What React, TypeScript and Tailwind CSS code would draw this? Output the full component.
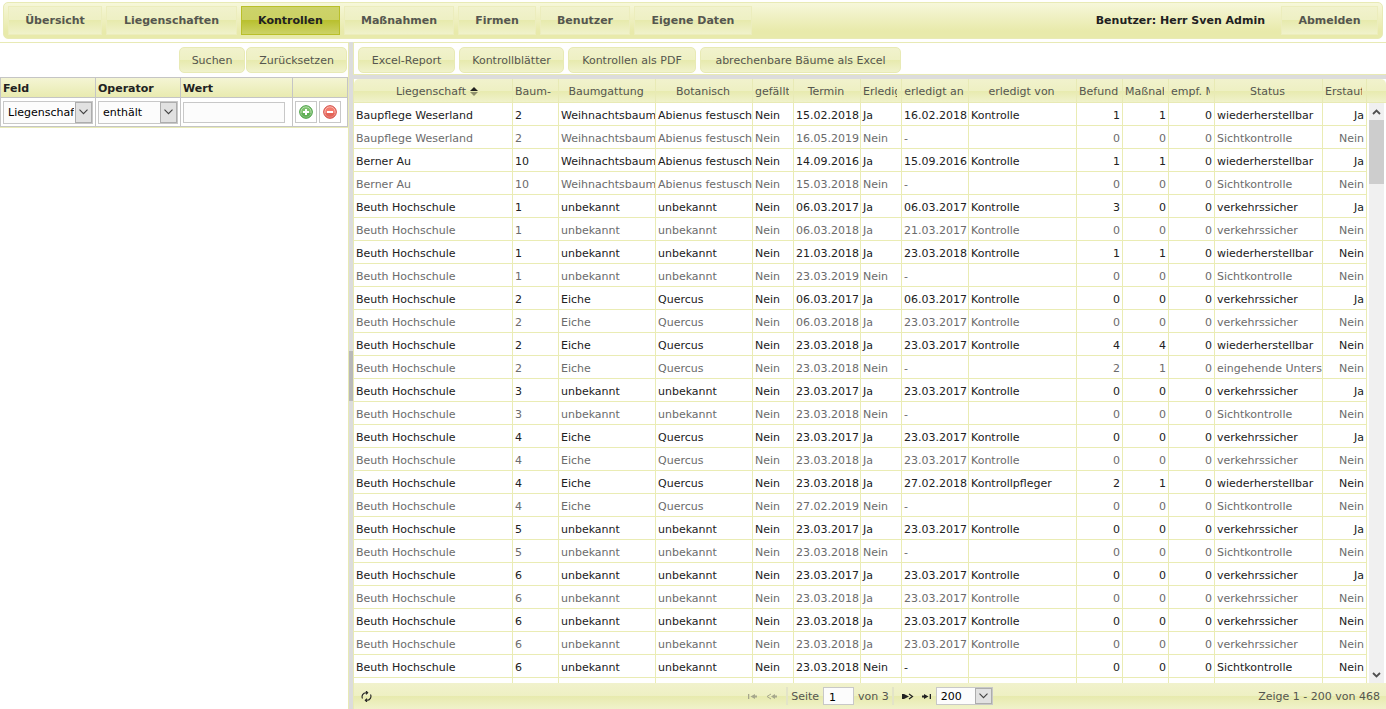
import type { ReactNode } from "react";

type Row = string[];

const navItems = [
  { label: "Übersicht", width: "min-w-[94px]" },
  { label: "Liegenschaften", width: "min-w-[131px]" },
  { label: "Kontrollen", width: "min-w-[99px]", active: true },
  { label: "Maßnahmen", width: "min-w-[110px]" },
  { label: "Firmen", width: "min-w-[78px]" },
  { label: "Benutzer", width: "min-w-[90px]" },
  { label: "Eigene Daten", width: "min-w-[118px]" },
];

const columns = [
  { label: "Liegenschaft", width: "", sorted: true },
  { label: "Baum-", width: "w-[46px]", narrow: true },
  { label: "Baumgattung", width: "w-[97px]" },
  { label: "Botanisch", width: "w-[97px]" },
  { label: "gefällt", width: "w-[41px]", narrow: true },
  { label: "Termin", width: "w-[67px]" },
  { label: "Erledigt", width: "w-[41px]", narrow: true },
  { label: "erledigt an", width: "w-[67px]" },
  { label: "erledigt von", width: "w-[108px]" },
  { label: "Befunde", width: "w-[46px]", narrow: true, right: true },
  { label: "Maßnahmen", width: "w-[46px]", narrow: true, right: true },
  { label: "empf. Maßnahmen", width: "w-[46px]", narrow: true, right: true },
  { label: "Status", width: "w-[108px]" },
  { label: "Erstaufnahme", width: "w-[44px]", narrow: true, right: true },
];

const W = "Weihnachtsbaum";
const A = "Abienus festuschristi";
const BH = "Beuth Hochschule";
const U = "unbekannt";
const K = "Kontrolle";
const V = "verkehrssicher";
const S = "Sichtkontrolle";
const H = "wiederherstellbar";

const rows: Row[] = [
  ["Baupflege Weserland", "2", W, A, "Nein", "15.02.2018", "Ja", "16.02.2018", K, "1", "1", "0", H, "Ja"],
  ["Baupflege Weserland", "2", W, A, "Nein", "16.05.2019", "Nein", "-", "", "0", "0", "0", S, "Nein"],
  ["Berner Au", "10", W, A, "Nein", "14.09.2016", "Ja", "15.09.2016", K, "1", "1", "0", H, "Ja"],
  ["Berner Au", "10", W, A, "Nein", "15.03.2018", "Nein", "-", "", "0", "0", "0", S, "Nein"],
  [BH, "1", U, U, "Nein", "06.03.2017", "Ja", "06.03.2017", K, "3", "0", "0", V, "Ja"],
  [BH, "1", U, U, "Nein", "06.03.2018", "Ja", "21.03.2017", K, "0", "0", "0", V, "Nein"],
  [BH, "1", U, U, "Nein", "21.03.2018", "Ja", "23.03.2018", K, "1", "1", "0", H, "Nein"],
  [BH, "1", U, U, "Nein", "23.03.2019", "Nein", "-", "", "0", "0", "0", S, "Nein"],
  [BH, "2", "Eiche", "Quercus", "Nein", "06.03.2017", "Ja", "06.03.2017", K, "0", "0", "0", V, "Ja"],
  [BH, "2", "Eiche", "Quercus", "Nein", "06.03.2018", "Ja", "23.03.2017", K, "0", "0", "0", V, "Nein"],
  [BH, "2", "Eiche", "Quercus", "Nein", "23.03.2018", "Ja", "23.03.2017", K, "4", "4", "0", H, "Nein"],
  [BH, "2", "Eiche", "Quercus", "Nein", "23.03.2018", "Nein", "-", "", "2", "1", "0", "eingehende Untersuchung", "Nein"],
  [BH, "3", U, U, "Nein", "23.03.2017", "Ja", "23.03.2017", K, "0", "0", "0", V, "Ja"],
  [BH, "3", U, U, "Nein", "23.03.2018", "Nein", "-", "", "0", "0", "0", S, "Nein"],
  [BH, "4", "Eiche", "Quercus", "Nein", "23.03.2017", "Ja", "23.03.2017", K, "0", "0", "0", V, "Ja"],
  [BH, "4", "Eiche", "Quercus", "Nein", "23.03.2018", "Ja", "23.03.2017", K, "0", "0", "0", V, "Nein"],
  [BH, "4", "Eiche", "Quercus", "Nein", "23.03.2018", "Ja", "27.02.2018", "Kontrollpfleger", "2", "1", "0", H, "Nein"],
  [BH, "4", "Eiche", "Quercus", "Nein", "27.02.2019", "Nein", "-", "", "0", "0", "0", S, "Nein"],
  [BH, "5", U, U, "Nein", "23.03.2017", "Ja", "23.03.2017", K, "0", "0", "0", V, "Ja"],
  [BH, "5", U, U, "Nein", "23.03.2018", "Nein", "-", "", "0", "0", "0", S, "Nein"],
  [BH, "6", U, U, "Nein", "23.03.2017", "Ja", "23.03.2017", K, "0", "0", "0", V, "Ja"],
  [BH, "6", U, U, "Nein", "23.03.2018", "Ja", "23.03.2017", K, "0", "0", "0", V, "Nein"],
  [BH, "6", U, U, "Nein", "23.03.2018", "Ja", "23.03.2017", K, "0", "0", "0", V, "Nein"],
  [BH, "6", U, U, "Nein", "23.03.2018", "Ja", "23.03.2017", K, "0", "0", "0", V, "Nein"],
  [BH, "6", U, U, "Nein", "23.03.2018", "Nein", "-", "", "0", "0", "0", S, "Nein"],
  ["", "", "", "", "", "", "", "", "", "", "", "", "", ""],
];

const glossy = "bg-[linear-gradient(#f1f2cd,#eef0c3_50%,#e7eaad_50%,#f0f2cb)]";

function ToolButton({ children, width }: { children: ReactNode; width: string }) {
  return (
    <button
      type="button"
      className={`h-[26px] rounded-[5px] border border-[#e8eab5] pt-[2px] text-center text-[#55564f] ${glossy} ${width}`}
    >
      {children}
    </button>
  );
}

// Select with its own arrow box on the right
function Select({ label, value, width, height }: { label: string; value: string; width: string; height: string }) {
  return (
    <span className={`relative inline-block border border-[#c8c8c8] bg-[#fcfcfc] align-middle ${width} ${height}`}>
      <select
        aria-label={label}
        className="block h-full w-full appearance-none overflow-hidden bg-transparent pt-[2px] pr-[18px] pl-1 text-black outline-none"
      >
        <option>{value}</option>
      </select>
      <span className="pointer-events-none absolute inset-y-0 right-0 flex w-[17px] items-center justify-center border border-[#adadad] bg-[#e1e1e1]">
        <svg width="9" height="6" viewBox="0 0 9 6" fill="none" stroke="#404040" strokeWidth="1.1">
          <path d="M0.5 0.7 4.5 4.7 8.5 0.7" />
        </svg>
      </span>
    </span>
  );
}

function RoundIcon({ kind }: { kind: "add" | "remove" }) {
  const dark = kind === "add" ? "#3f9a3a" : "#d0443c";
  const light = kind === "add" ? "#7cc26c" : "#f47c6e";
  return (
    <svg width="14" height="14" viewBox="0 0 14 14">
      <circle cx="7" cy="7" r="6.3" fill={light} stroke={dark} />
      <circle cx="7" cy="7" r="5.2" fill="none" stroke="#fff" strokeOpacity="0.45" />
      <path d="M2 8a5 5 0 0 0 10 0Z" fill={dark} fillOpacity="0.45" />
      <path d={kind === "add" ? "M4 7h6M7 4v6" : "M4 7h6"} stroke="#fff" strokeWidth="2" />
    </svg>
  );
}

function Navigation() {
  return (
    <nav className="mx-[3px] mt-[2px] mb-[3px] flex h-[37px] shrink-0 items-center gap-1 rounded-[5px] border border-[#e8eab5] bg-[linear-gradient(#f6f7da,#e8eaab_80%)] px-1 font-bold text-[#55564f]">
      {navItems.map((item) => (
        <a
          key={item.label}
          href="#"
          aria-current={item.active ? "page" : undefined}
          className={`flex h-[29px] items-center justify-center border pt-px ${item.width} ${
            item.active
              ? "border-[#b9bf2a] bg-[linear-gradient(#cdd36a,#cbd163_50%,#b9c02f_50%,#ccd266)] text-[#212121]"
              : `border-[#ecedbd] ${glossy}`
          }`}
        >
          {item.label}
        </a>
      ))}
      <span className="ml-auto pt-px text-[#212121]">Benutzer: Herr Sven Admin</span>
      <button type="button" className={`ml-3 h-[29px] w-[97px] border border-[#ecedbd] pt-px ${glossy}`}>
        Abmelden
      </button>
    </nav>
  );
}

function SearchPanel() {
  return (
    <aside className="w-[349px] shrink-0 border-t border-r border-[#e8eab5]">
      <div className="flex h-[34px] items-center justify-end gap-px pr-px">
        <ToolButton width="w-[66px]">Suchen</ToolButton>
        <ToolButton width="w-[101px]">Zurücksetzen</ToolButton>
      </div>
      <table className="w-full table-fixed border-collapse">
        <thead>
          <tr className="h-5 bg-[linear-gradient(#f4f5d4,#e8eaae)] text-left text-[#212121]">
            <th className="w-[95px] border border-[#c5c5c5] px-[2px] pt-[2px] pb-0">Feld</th>
            <th className="w-[85px] border border-[#c5c5c5] px-[2px] pt-[2px] pb-0">Operator</th>
            <th className="border border-[#c5c5c5] px-[2px] pt-[2px] pb-0">Wert</th>
            <th className="w-[55px] border border-[#c5c5c5] p-0" aria-label="Aktion" />
          </tr>
        </thead>
        <tbody>
          <tr className="h-[29px]">
            <td className="border border-[#c5c5c5] px-[2px] py-0">
              <Select label="Feld" value="Liegenschaft" width="w-[90px]" height="h-[23px]" />
            </td>
            <td className="border border-[#c5c5c5] px-[2px] py-0">
              <Select label="Operator" value="enthält" width="w-[80px]" height="h-[23px]" />
            </td>
            <td className="border border-[#c5c5c5] px-[2px] py-0">
              <input
                aria-label="Wert"
                className="block h-[21px] w-[102px] border border-[#c8c8c8] bg-[#fcfcfc] px-1 outline-none"
              />
            </td>
            <td className="border border-[#c5c5c5] px-[2px] py-0">
              <div className="flex gap-[2px]">
                <button type="button" aria-label="Hinzufügen" className="flex h-[22px] w-[22px] items-center justify-center border border-[#c8c8c8]">
                  <RoundIcon kind="add" />
                </button>
                <button type="button" aria-label="Entfernen" className="flex h-[22px] w-[22px] items-center justify-center border border-[#c8c8c8]">
                  <RoundIcon kind="remove" />
                </button>
              </div>
            </td>
          </tr>
        </tbody>
      </table>
      <div className="border-t border-[#e8eab5]" />
    </aside>
  );
}

function Columns() {
  return (
    <colgroup>
      {columns.map((c) => (
        <col key={c.label} className={c.width} />
      ))}
    </colgroup>
  );
}

function Grid() {
  return (
    <section className="flex min-h-0 flex-1 flex-col overflow-hidden border-l border-[#e8eab5]">
      <div className={`shrink-0 overflow-hidden rounded-t-[5px] border-b border-[#e8eab5] pr-[19px] ${glossy}`}>
        <table className="w-full table-fixed border-separate border-spacing-0 text-[#55564f]">
          <Columns />
          <thead>
            <tr className="h-[23px]">
              {columns.map((c) => (
                <th
                  key={c.label}
                  scope="col"
                  className={`border-r border-[#e8eab5] pt-[2px] pr-1 pb-0 font-normal whitespace-nowrap ${
                    c.sorted ? "pl-3" : "pl-[2px]"
                  }`}
                >
                  <div className={`overflow-hidden ${c.narrow ? "text-left" : ""}`}>
                    {c.label}
                    {c.sorted && (
                      <svg className="ml-1 inline-block align-[-1px]" width="8" height="9" viewBox="0 0 8 9">
                        <path d="M0 4 4 0 8 4Z" fill="#222" />
                        <path d="M0 5 4 9 8 5Z" fill="#8f906c" />
                      </svg>
                    )}
                  </div>
                </th>
              ))}
            </tr>
          </thead>
        </table>
      </div>
      <div className="flex min-h-0 flex-1">
        <div className="min-w-0 flex-1 overflow-hidden">
          <table className="w-full table-fixed border-separate border-spacing-0">
            <Columns />
            <tbody>
              {rows.map((row, r) => (
                <tr key={r} className={`h-[23px] ${r % 2 ? "text-[#6b6b6b]" : "text-[#212121]"}`}>
                  {row.map((cell, i) => (
                    <td
                      key={i}
                      className={`overflow-hidden border-r border-b border-[#eaecb4] pt-[3px] pb-0 pl-[2px] whitespace-nowrap ${
                        columns[i].right ? "pr-[2px] text-right" : ""
                      }`}
                    >
                      {cell}
                    </td>
                  ))}
                </tr>
              ))}
            </tbody>
          </table>
        </div>
        <div className="mx-[2px] flex w-[15px] shrink-0 flex-col items-center bg-[#f0f0f0]">
          <div className="flex h-[17px] shrink-0 items-center">
            <svg width="9" height="6" viewBox="0 0 9 6" fill="none" stroke="#505050" strokeWidth="1.8">
              <path d="M1 5 4.5 1.5 8 5" />
            </svg>
          </div>
          <div className="h-16 w-full bg-[#cdcdcd]" />
          <div className="mt-auto flex h-[17px] shrink-0 items-center">
            <svg width="9" height="6" viewBox="0 0 9 6" fill="none" stroke="#505050" strokeWidth="1.8">
              <path d="M1 1 4.5 4.5 8 1" />
            </svg>
          </div>
        </div>
      </div>
      <Pager />
    </section>
  );
}

function Pager() {
  return (
    <div className={`grid h-[26px] shrink-0 grid-cols-[1fr_auto_1fr] items-center pr-[6px] pl-[7px] text-[#55564f] ${glossy}`}>
      <button type="button" aria-label="Aktualisieren" className="w-[11px] pt-px">
        <svg width="11" height="11" viewBox="0 0 11 11" fill="none" stroke="#222" strokeWidth="1.1">
          <path d="M1.5 7.5A4 4 0 0 1 5 1.7h1M5 0l1.7 1.7L5 3.4M9.5 3.5A4 4 0 0 1 6 9.3H5M6 7.6 4.3 9.3 6 11" />
        </svg>
      </button>
      <div className="flex items-center">
        <button type="button" aria-label="Erste Seite" disabled className="mr-2">
          <svg width="10" height="7" viewBox="0 0 10 7" fill="#a6a78c">
            <path d="M0 1h1.3v5H0ZM2.500 3.500 7 1v1.500h2v2H7V6Z" />
          </svg>
        </button>
        <button type="button" aria-label="Vorige Seite" disabled className="mr-2">
          <svg width="12" height="7" viewBox="0 0 12 7" fill="#a6a78c">
            <path d="M5 3.5 9 1v1.500h2v2H9V6Z" />
            <path d="M5 1 1 3.5 5 6" fill="none" stroke="#a6a78c" />
          </svg>
        </button>
        <span className="mr-[3px] h-[18px] w-[2px] bg-[#e3e4c8]" />
        <label htmlFor="page" className="pt-[2px]">Seite</label>
        <input
          id="page"
          defaultValue="1"
          className="mx-1 h-[18px] w-[31px] border border-[#c8c8c8] bg-[#fcfcfc] px-[5px] pt-[2px] text-black outline-none"
        />
        <span className="pt-[2px]">von 3</span>
        <span className="mr-2 ml-[3px] h-[18px] w-[2px] bg-[#e3e4c8]" />
        <button type="button" aria-label="Nächste Seite" className="mr-2">
          <svg width="12" height="7" viewBox="0 0 12 7" fill="#222">
            <path d="M0 1h2l5 2.500L2 6H0Z" />
            <path d="M7 1 10.500 3.500 7 6" fill="none" stroke="#222" strokeWidth="1.2" />
          </svg>
        </button>
        <button type="button" aria-label="Letzte Seite" className="mr-1">
          <svg width="10" height="7" viewBox="0 0 10 7" fill="#222">
            <path d="M0 2.500h2V1l4.500 2.500L2 6V4.500H0ZM7.700 1H9v5H7.700Z" />
          </svg>
        </button>
        <Select label="Zeilen pro Seite" value="200" width="w-[57px]" height="h-[18px]" />
      </div>
      <span className="pt-[2px] text-right">Zeige 1 - 200 von 468</span>
    </div>
  );
}

export default function App() {
  return (
    <div className="flex h-screen min-h-[400px] flex-col overflow-hidden bg-white font-['DejaVu_Sans',sans-serif] text-[11px] leading-[14px]">
      <Navigation />
      <div className="flex min-h-0 flex-1">
        <SearchPanel />
        <div className="flex w-1 shrink-0 flex-col justify-center bg-[#dcdcdc]">
          <div className="h-[50px] bg-[#b9b9b9]" />
        </div>
        <main className="flex min-w-0 flex-1 flex-col">
          <div className="flex h-[33px] shrink-0 items-end gap-1 border-y border-l border-[#e8eab5] pb-px pl-1">
            <ToolButton width="w-[97px]">Excel-Report</ToolButton>
            <ToolButton width="w-[105px]">Kontrollblätter</ToolButton>
            <ToolButton width="w-[128px]">Kontrollen als PDF</ToolButton>
            <ToolButton width="w-[201px]">abrechenbare Bäume als Excel</ToolButton>
          </div>
          <div className="h-1 shrink-0 bg-[#dcdcdc]" />
          <Grid />
        </main>
      </div>
    </div>
  );
}
